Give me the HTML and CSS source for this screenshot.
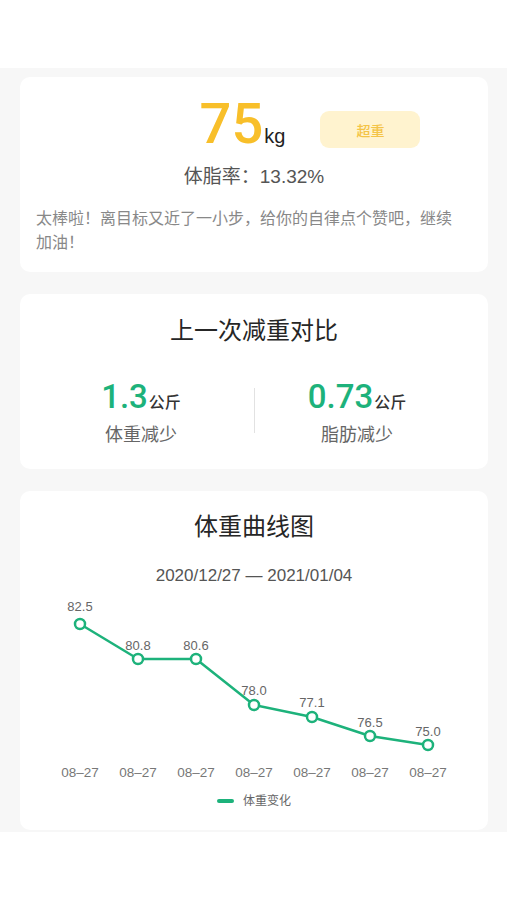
FILE: index.html
```html
<!DOCTYPE html>
<html lang="zh-CN">
<head>
<meta charset="utf-8">
<title>体重</title>
<link rel="stylesheet" href="styles.css">
</head>
<body>
<div class="topbar"></div>
<main class="main">
  <section class="card card-weight">
    <div class="weight-row">
      <div class="weight-num"><span class="big">75</span><span class="kg">kg</span></div>
      <div class="badge">超重</div>
    </div>
    <div class="fat">体脂率：13.32%</div>
    <p class="msg">太棒啦！离目标又近了一小步，给你的自律点个赞吧，继续加油！</p>
  </section>

  <section class="card card-compare">
    <h2 class="title">上一次减重对比</h2>
    <div class="stats">
      <div class="stat">
        <div class="stat-val"><span class="num">1.3</span><span class="unit">公斤</span></div>
        <div class="stat-label">体重减少</div>
      </div>
      <div class="divider"></div>
      <div class="stat">
        <div class="stat-val"><span class="num">0.73</span><span class="unit">公斤</span></div>
        <div class="stat-label">脂肪减少</div>
      </div>
    </div>
  </section>

  <section class="card card-chart">
    <h2 class="title">体重曲线图</h2>
    <div class="range">2020/12/27 — 2021/01/04</div>
    <svg class="chart" width="468" height="190" viewBox="0 0 468 190">
      <polyline class="line" points="60,29 118,64 176,64 234,110 292,122 350,141 408,150"/>
      <g class="dots">
        <circle cx="60" cy="29" r="5"/>
        <circle cx="118" cy="64" r="5"/>
        <circle cx="176" cy="64" r="5"/>
        <circle cx="234" cy="110" r="5"/>
        <circle cx="292" cy="122" r="5"/>
        <circle cx="350" cy="141" r="5"/>
        <circle cx="408" cy="150" r="5"/>
      </g>
      <g class="vals">
        <text x="60" y="16">82.5</text>
        <text x="118" y="55">80.8</text>
        <text x="176" y="55">80.6</text>
        <text x="234" y="100">78.0</text>
        <text x="292" y="112">77.1</text>
        <text x="350" y="132">76.5</text>
        <text x="408" y="141">75.0</text>
      </g>
      <g class="xlabels">
        <text x="60" y="182">08–27</text>
        <text x="118" y="182">08–27</text>
        <text x="176" y="182">08–27</text>
        <text x="234" y="182">08–27</text>
        <text x="292" y="182">08–27</text>
        <text x="350" y="182">08–27</text>
        <text x="408" y="182">08–27</text>
      </g>
    </svg>
    <div class="legend"><span class="legend-line"></span><span class="legend-text">体重变化</span></div>
  </section>
</main>
</body>
</html>
```

FILE: styles.css
```css
* { box-sizing: border-box; }
html, body {
  margin: 0;
  padding: 0;
  background: #ffffff;
  font-family: "Liberation Sans", "Noto Sans CJK SC", sans-serif;
  color: #333;
}
.topbar { height: 68px; background: #fff; }
.main {
  background: #f7f7f7;
  padding: 9px 19px 2px 20px;
  display: flex;
  flex-direction: column;
  gap: 22px;
}
.card {
  background: #fff;
  border-radius: 10px;
}
.card-weight { padding: 19px 24px 17px 16px; }
.weight-row {
  display: flex;
  justify-content: center;
  align-items: flex-start;
  padding-left: 120px;
  height: 56px;
}
.weight-num { display: flex; align-items: baseline; height: 56px; line-height: 56px; }
.big { font-family: Roboto, "Liberation Sans", sans-serif; font-weight: 500; font-size: 56px; color: #f8bf2a; }
.kg { font-size: 20px; color: #222; margin-left: 1px; }
.badge {
  margin-left: 35px;
  margin-top: 15px;
  width: 100px;
  height: 37px;
  border-radius: 9px;
  background: #fff3cf;
  color: #f4c447;
  font-size: 14px;
  font-weight: 500;
  display: flex;
  align-items: center;
  justify-content: center;
}
.fat {
  margin-top: 12px;
  text-align: center;
  font-size: 19px;
  line-height: 26px;
  height: 26px;
  color: #555;
  padding-left: 8px;
}
.msg {
  margin: 17px 0 0;
  font-size: 16px;
  line-height: 24px;
  color: #888;
}
.title {
  margin: 0;
  font-weight: normal;
  text-align: center;
  font-size: 24px;
  line-height: 32px;
  height: 32px;
  color: #262626;
}
.card-compare { padding: 21px 0 22px; }
.stats {
  margin-top: 34px;
  display: grid;
  grid-template-columns: 226px 1px 1fr;
  align-items: center;
  padding: 0 29px 0 8px;
}
.stat { display: flex; flex-direction: column; align-items: center; }
.stat-val { display: flex; align-items: baseline; height: 32px; line-height: 32px; }
.num { font-family: Roboto, "Liberation Sans", sans-serif; font-weight: 500; font-size: 33px; color: #1db27b; }
.unit { font-size: 16px; color: #333; margin-left: 1px; font-weight: 500; }
.stat-label {
  margin-top: 10px;
  font-size: 18px;
  line-height: 24px;
  height: 24px;
  color: #666;
}
.divider { width: 1px; height: 45px; background: #e2e2e2; margin-top: -8px; }
.card-chart { padding: 20px 0 21px; }
.range {
  margin-top: 22px;
  text-align: center;
  font-size: 17px;
  line-height: 22px;
  height: 22px;
  color: #555;
}
.chart { display: block; margin-top: 8px; }
.line { fill: none; stroke: #1db27b; stroke-width: 2.5; stroke-linejoin: round; }
.dots circle { fill: #fff; stroke: #1db27b; stroke-width: 2.5; }
.vals text {
  font-family: "Liberation Sans", sans-serif;
  font-size: 13px;
  fill: #666;
  text-anchor: middle;
}
.xlabels text {
  font-family: "Liberation Sans", sans-serif;
  font-size: 13.5px;
  fill: #777;
  text-anchor: middle;
}
.legend {
  margin-top: 8px;
  display: flex;
  justify-content: center;
  align-items: center;
  height: 16px;
}
.legend-line {
  width: 17px;
  height: 4px;
  border-radius: 2px;
  background: #1db27b;
}
.legend-text {
  margin-left: 9px;
  font-size: 12px;
  line-height: 16px;
  color: #666;
}
```
